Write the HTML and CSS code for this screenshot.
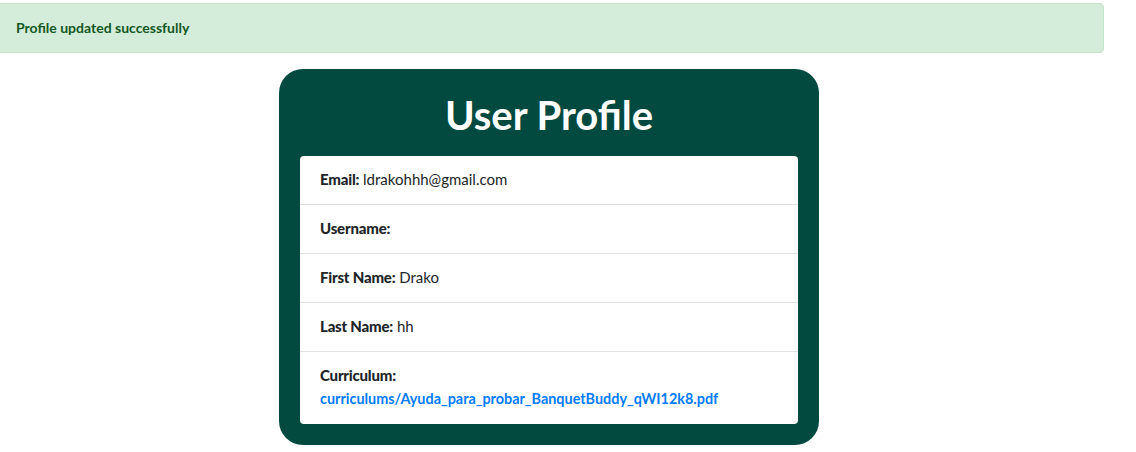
FILE: index.html
```html
<!DOCTYPE html>
<html lang="en">
<head>
<meta charset="utf-8">
<title>User Profile</title>
<link rel="stylesheet" href="styles.css">
</head>
<body>
<div class="alert">Profile updated successfully</div>
<div class="card">
  <h1 class="title">User Profile</h1>
  <ul class="list">
    <li class="item"><strong>Email:</strong> ldrakohhh@gmail.com</li>
    <li class="item"><strong>Username:</strong></li>
    <li class="item"><strong>First Name:</strong> Drako</li>
    <li class="item"><strong>Last Name:</strong> hh</li>
    <li class="item"><strong>Curriculum:</strong><a class="link" href="#">curriculums/Ayuda_para_probar_BanquetBuddy_qWI12k8.pdf</a></li>
  </ul>
</div>
</body>
</html>
```
FILE: styles.css
```css
* { box-sizing: border-box; }
body {
  margin: 0;
  font-family: Lato, "Noto Sans", sans-serif;
  font-size: 15px;
  line-height: 24px;
  color: #212529;
  background: #fff;
}
.alert {
  margin: 3px 32px 0 -6px;
  height: 50px;
  padding: 12px 21px;
  background: #d4edda;
  border: 1px solid #c3e6cb;
  border-radius: 4px;
  color: #155724;
  font-weight: 700;
  font-size: 14px;
}
.card {
  width: 540px;
  margin: 16px 0 0 279px;
  background: #024a3f;
  border-radius: 24px;
  padding: 21px;
}
.title {
  margin: 0;
  height: 66px;
  color: #fff;
  text-align: center;
  font-size: 40px;
  line-height: 50px;
  font-weight: 700;
}
.list {
  list-style: none;
  margin: 0;
  padding: 0;
  background: #fff;
  border-radius: 4px;
}
.item {
  padding: 11px 20px 13px;
  border-top: 1px solid #dee2e6;
}
.item:first-child { border-top: 0; }
.item strong { font-weight: 900; letter-spacing: -0.2px; }
.link {
  display: block;
  height: 24px;
  color: #007bff;
  text-decoration: none;
  font-weight: 700;
  font-size: 14.4px;
  line-height: 24px;
}
```
